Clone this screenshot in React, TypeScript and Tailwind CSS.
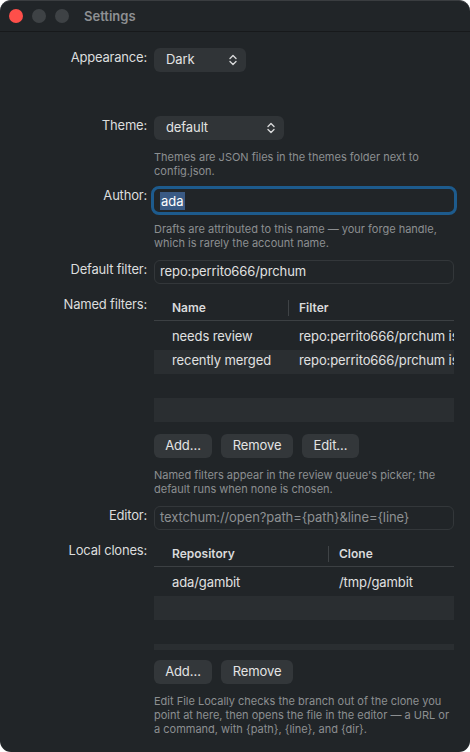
import { ReactNode } from "react";

const Chevrons = () => (
  <svg width="8" height="12" viewBox="0 0 8 12" fill="none" className="shrink-0">
    <path d="M1 4.5 L4 1.5 L7 4.5" stroke="#d7d8d9" strokeWidth="1.4" strokeLinecap="round" strokeLinejoin="round" />
    <path d="M1 7.5 L4 10.5 L7 7.5" stroke="#d7d8d9" strokeWidth="1.4" strokeLinecap="round" strokeLinejoin="round" />
  </svg>
);

const Row = ({ label, children }: { label: string; children: ReactNode }) => (
  <div className="flex items-start">
    <div className="w-[147px] shrink-0 text-right text-[13px] leading-4 tracking-[-0.2px] text-[#dcdddd] pt-[1px]">{label}</div>
    <div className="ml-[7px] w-[300px]">{children}</div>
  </div>
);

const Popup = ({ value, width }: { value: string; width: string }) => (
  <div className={`${width} h-6 rounded-[6px] bg-[#303437] flex items-center justify-between pl-[12px] pr-[9px] text-[13px] tracking-[-0.1px] text-[#e2e3e3]`}>
    <span>{value}</span>
    <Chevrons />
  </div>
);

const Help = ({ children }: { children: ReactNode }) => (
  <p className="text-[11px] leading-[14px] text-[#8c8f91]">{children}</p>
);

const Button = ({ children, width }: { children: ReactNode; width: string }) => (
  <button className={`${width} h-6 rounded-[6px] bg-[#33373a] text-[13px] tracking-[-0.1px] text-[#e3e4e4] flex items-center justify-center`}>
    {children}
  </button>
);

type Column = { title: string; width: string };

const Table = ({
  columns,
  rows,
  height,
}: {
  columns: Column[];
  rows: string[][];
  height: string;
}) => {
  const bands = [0, 1, 2, 3, 4, 5];
  return (
    <div className={`${height} w-[300px] overflow-hidden`}>
      {/* Header */}
      <div className="h-[26px] flex items-center border-b border-[#3c4043] text-[12px] font-semibold text-[#d9dadb]">
        {columns.map((col, i) => (
          <div key={col.title} className={`${col.width} shrink-0 flex items-center h-4 ${i === 0 ? "pl-[18px] border-r border-[#3f4346]" : "pl-[10px]"}`}>
            {col.title}
          </div>
        ))}
      </div>
      <div className="h-[5px]" />
      {bands.map((b) => (
        <div
          key={b}
          className={`h-6 flex items-start pt-[1px] whitespace-nowrap overflow-hidden text-[13px] tracking-[-0.1px] text-[#e0e1e1] ${b % 2 === 1 ? "bg-[#2a2e31]" : ""}`}
        >
          {rows[b] &&
            rows[b].map((cell, i) => (
              <div key={i} className={`${columns[i].width} shrink-0 overflow-hidden ${i === 0 ? "pl-[18px]" : "pl-[10px]"}`}>
                {cell}
              </div>
            ))}
        </div>
      ))}
    </div>
  );
};

const App = () => {
  return (
    <div className="w-[470px] h-[752px] bg-white" style={{ fontFamily: "Inter, 'Noto Sans', sans-serif" }}>
      <div className="w-full h-full rounded-[11px] bg-[#212528] overflow-hidden border-t border-[#3a3d40]">
        {/* Title bar */}
        <div className="h-[31px] flex items-center border-b border-[#17191b]">
          <div className="flex items-center gap-[9px] pl-[9px]">
            <span className="w-[14px] h-[14px] rounded-full bg-[#fe4f4a]" />
            <span className="w-[14px] h-[14px] rounded-full bg-[#3e4245]" />
            <span className="w-[14px] h-[14px] rounded-full bg-[#3e4245]" />
          </div>
          <span className="ml-[15px] pt-[1px] text-[13px] font-semibold text-[#8e9093]">Settings</span>
        </div>

        <div className="flex flex-col pt-4">
          <Row label="Appearance:">
            <Popup value="Dark" width="w-[92px]" />
          </Row>

          <div className="mt-[44px]">
            <Row label="Theme:">
              <Popup value="default" width="w-[130px]" />
              <div className="mt-[10px]">
                <Help>
                  Themes are JSON files in the themes folder next to
                  <br />
                  config.json.
                </Help>
              </div>
            </Row>
          </div>

          <div className="mt-[8px]">
            <Row label="Author:">
              <div className="-ml-[3px] w-[306px] h-[29px] rounded-[8px] border-[3px] border-[#1d5b8d] flex items-center pl-[6px]">
                <span className="bg-[#3a5a84] text-[13px] leading-[18px] text-white px-[1px]">ada</span>
              </div>
              <div className="mt-[7px]">
                <Help>
                  Drafts are attributed to this name — your forge handle,
                  <br />
                  which is rarely the account name.
                </Help>
              </div>
            </Row>
          </div>

          <div className="mt-[10px]">
            <Row label="Default filter:">
              <div className="h-6 rounded-[6px] border border-[#33373a] flex items-center pl-[5px] text-[13px] tracking-[-0.1px] text-[#e0e1e1]">
                repo:perrito666/prchum
              </div>
            </Row>
          </div>

          <div className="mt-[11px]">
            <Row label="Named filters:">
              <Table
                height="h-[128px]"
                columns={[
                  { title: "Name", width: "w-[135px]" },
                  { title: "Filter", width: "w-[165px]" },
                ]}
                rows={[
                  ["needs review", "repo:perrito666/prchum is:open"],
                  ["recently merged", "repo:perrito666/prchum is:merged"],
                ]}
              />
              <div className="mt-[11px] flex gap-[9px]">
                <Button width="w-[58px]">Add…</Button>
                <Button width="w-[72px]">Remove</Button>
                <Button width="w-[57px]">Edit…</Button>
              </div>
              <div className="mt-[10px]">
                <Help>
                  Named filters appear in the review queue's picker; the
                  <br />
                  default runs when none is chosen.
                </Help>
              </div>
            </Row>
          </div>

          <div className="mt-[10px]">
            <Row label="Editor:">
              <div className="h-6 rounded-[6px] border border-[#33373a] flex items-center pl-[5px] text-[13px] tracking-[-0.1px] text-[#8d9092]">
                {"textchum://open?path={path}&line={line}"}
              </div>
            </Row>
          </div>

          <div className="mt-[11px]">
            <Row label="Local clones:">
              <Table
                height="h-[109px]"
                columns={[
                  { title: "Repository", width: "w-[175px]" },
                  { title: "Clone", width: "w-[125px]" },
                ]}
                rows={[["ada/gambit", "/tmp/gambit"]]}
              />
              <div className="mt-[10px] flex gap-[9px]">
                <Button width="w-[58px]">Add…</Button>
                <Button width="w-[72px]">Remove</Button>
              </div>
              <div className="mt-[10px]">
                <Help>
                  Edit File Locally checks the branch out of the clone you
                  <br />
                  point at here, then opens the file in the editor — a URL or
                  <br />
                  {"a command, with {path}, {line}, and {dir}."}
                </Help>
              </div>
            </Row>
          </div>
        </div>
      </div>
    </div>
  );
};

export default App;
